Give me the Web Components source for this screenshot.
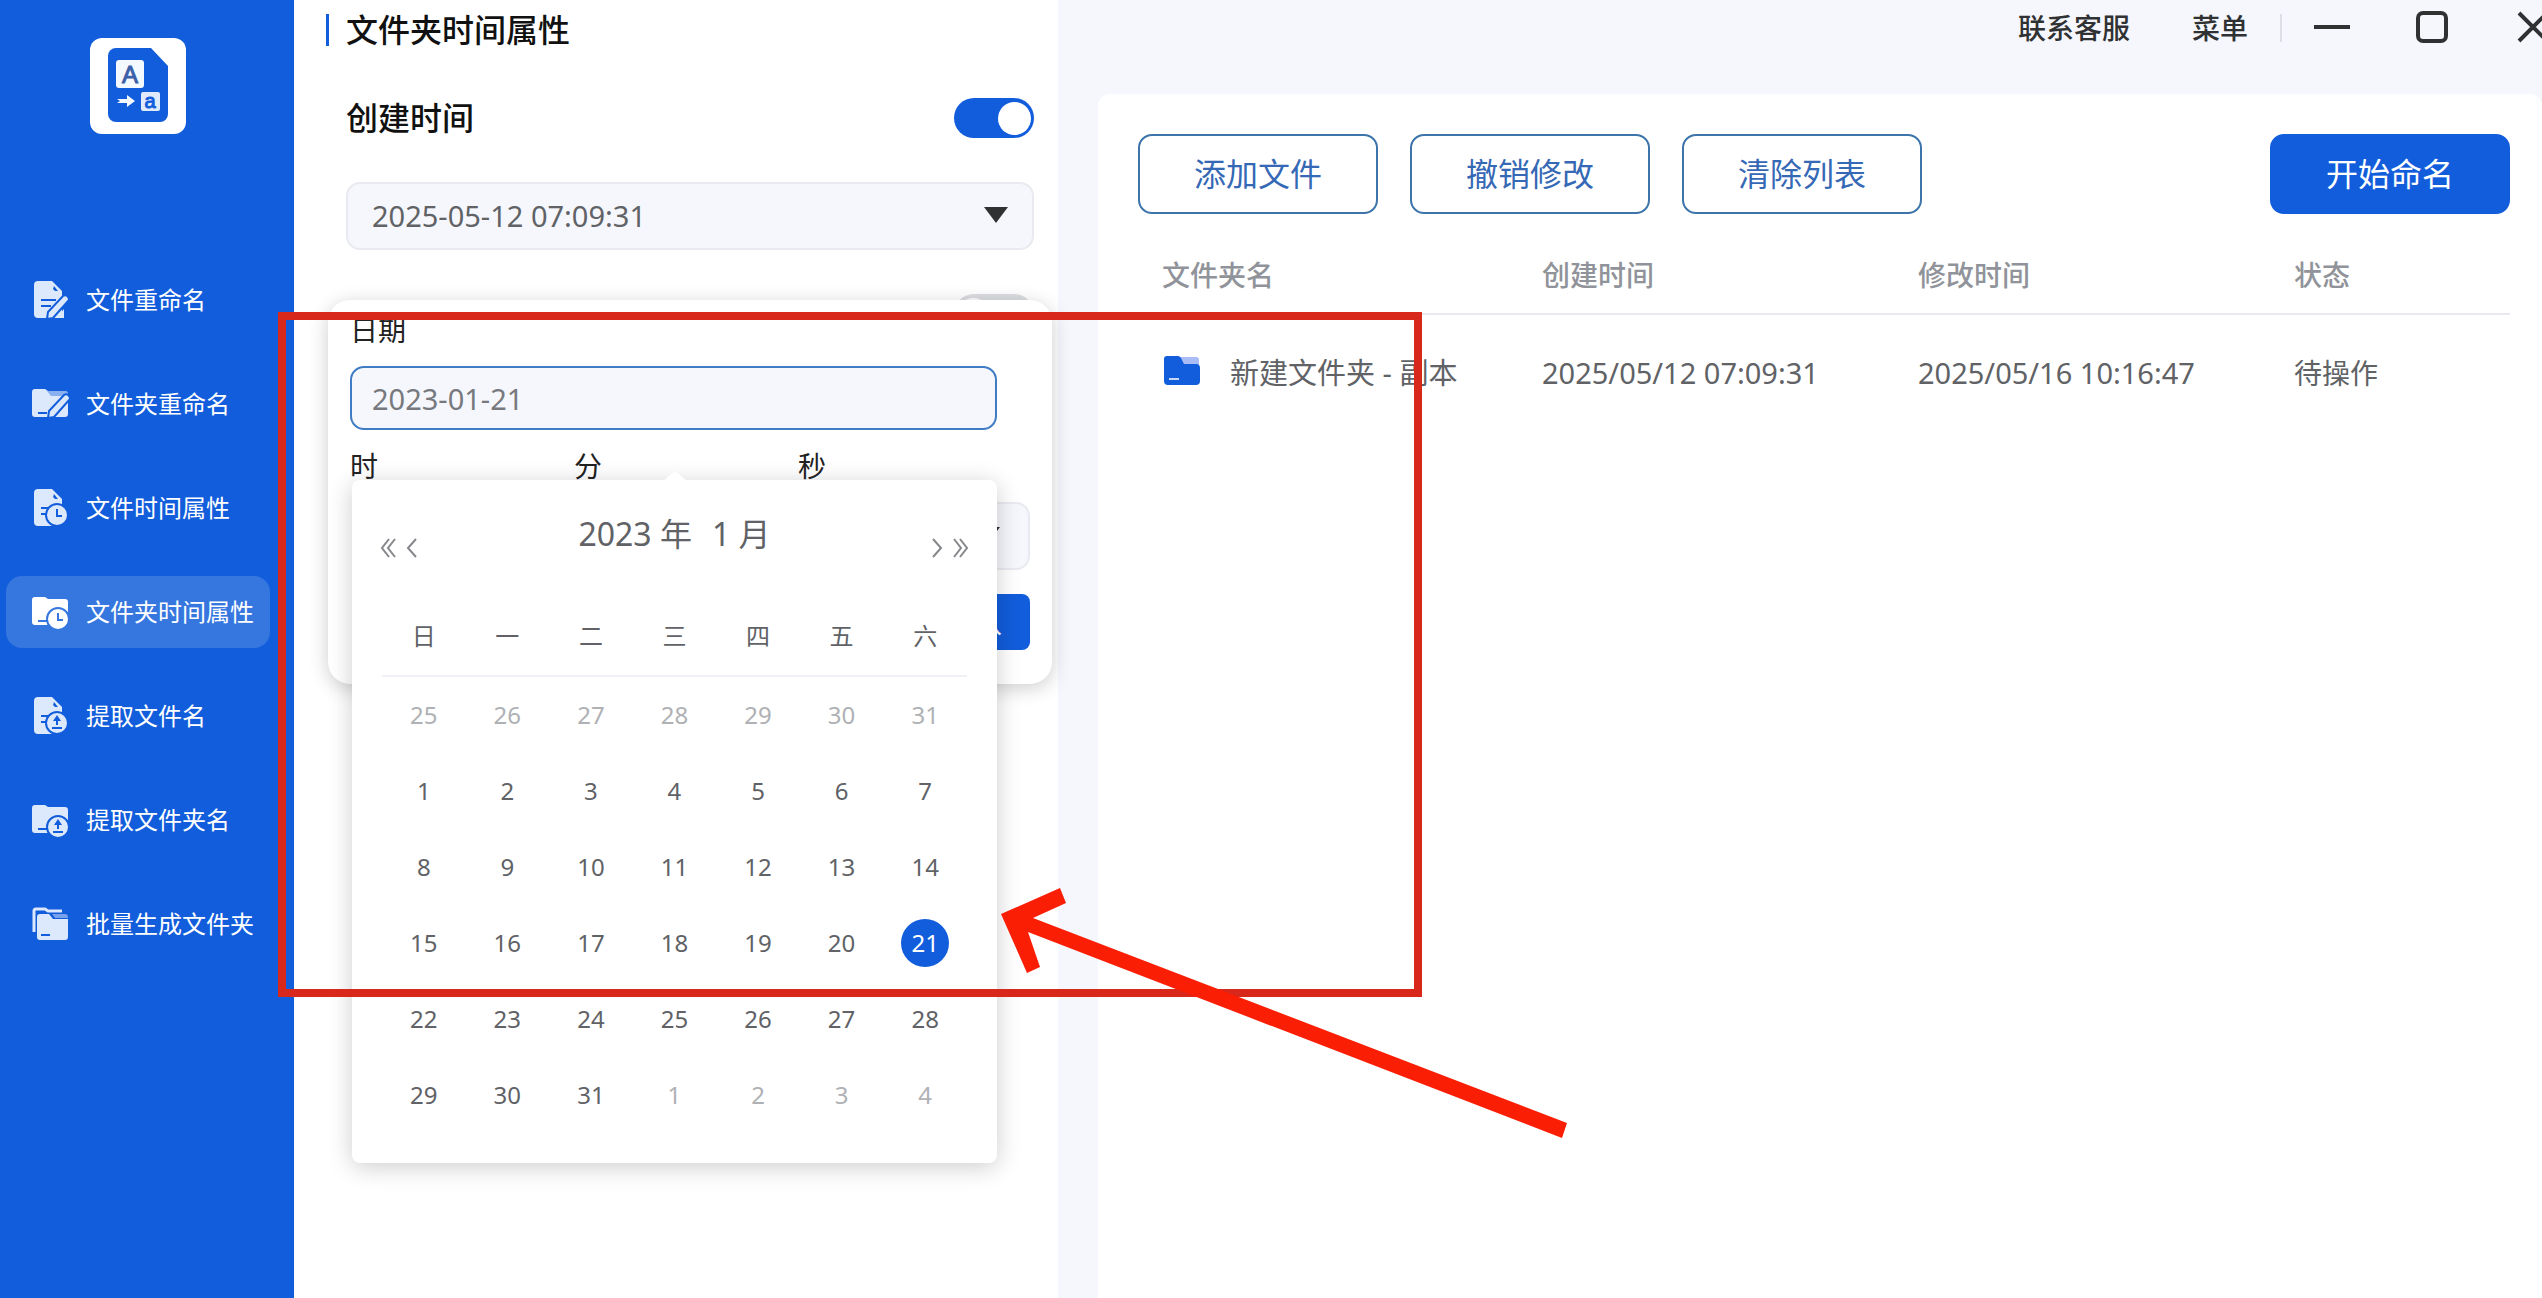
<!DOCTYPE html>
<html lang="zh-CN">
<head>
<meta charset="utf-8">
<meta name="viewport" content="width=device-width, initial-scale=1">
<title>文件夹时间属性</title>
<style>
  :root {
    --blue: #125ddb;
    --line: #e8eaf0;
    --field: #f5f7fc;
    --text: #606266;
  }
  html, body { height: 100%; }
  body {
    margin: 0;
    overflow: hidden;
    font-family: "Noto Sans", "Noto Sans CJK SC", sans-serif;
    font-size: 28px;
    line-height: 44px;
    color: #222;
    background: var(--field);
  }
</style>
</head>
<body>
<rename-app></rename-app>

<script>
const DOC = `<path fill="currentColor" d="M8 1h14l10 10v23a4 4 0 0 1-4 4H8a4 4 0 0 1-4-4V5a4 4 0 0 1 4-4z"/><path fill="var(--cut)" d="M24 6l4 5h-3l-2-2z"/>`;
const FOLDER = `<path fill="currentColor" d="M5 5h10l3 2h17a3 3 0 0 1 3 3v20a3 3 0 0 1-3 3H5a3 3 0 0 1-3-3V8a3 3 0 0 1 3-3z"/>`;
const PENCIL = `<path fill="currentColor" stroke="var(--cut)" stroke-width="2" d="M17 39l1-7L33 16q3-2 5 1t0 4L23 38z"/><path fill="currentColor" d="M26 38l8-9v9z"/>`;
const RING = `<circle cx="27" cy="27" r="11" fill="currentColor" stroke="var(--cut)" stroke-width="2"/>`;
const CLOCK = `${RING}<path fill="none" stroke="var(--cut)" stroke-width="2" d="M27 21v7h5"/>`;
const UPLOAD = `${RING}<path fill="var(--cut)" d="M27 19l4 6h-3v4h-2v-4h-3zM22 31h10v2H22z"/>`;
const LINES = `<path stroke="var(--cut)" stroke-width="2" d="M11 20h10M11 26h6"/>`;
const DASH = `<path stroke="var(--cut)" stroke-width="2" d="M8 29h9"/>`;

const icons = {
  "doc-edit": `${DOC}<path stroke="var(--cut)" stroke-width="2" d="M11 20h15M11 26h10"/>${PENCIL}`,
  "folder-edit": `${FOLDER}<path fill="var(--cut)" opacity=".4" d="M17 7h18q3 0 3 3v2H21z"/>${DASH}<g transform="translate(1 -5)">${PENCIL}</g>`,
  "doc-clock": `${DOC}${LINES}${CLOCK}`,
  "folder-clock": `${FOLDER}${DASH}<g transform="translate(1 0)">${CLOCK}</g>`,
  "doc-up": `${DOC}${LINES}${UPLOAD}`,
  "folder-up": `${FOLDER}${DASH}<g transform="translate(1 0)">${UPLOAD}</g>`,
  "folders": `<path fill="none" stroke="currentColor" stroke-width="3" d="M4 28V7q0-2 2-2h9l3 2h14"/>
    <path fill="currentColor" d="M10 10h9l4 5h15v18a3 3 0 0 1-3 3H10a3 3 0 0 1-3-3V13a3 3 0 0 1 3-3z"/>
    <path fill="currentColor" opacity=".5" d="M22 10h13q3 0 3 4H25z"/><path stroke="var(--cut)" stroke-width="2" d="M11 31h9"/>`
};

class NavItem extends HTMLElement {
  constructor() {
    super();
    this.attachShadow({ mode: "open" });
  }

  static get styles() {
    return /* css */`
      :host { display: block; --cut: var(--blue); }
      :host([active]) { --cut: #3677df; }
      a {
        display: flex;
        align-items: center;
        gap: 16px;
        height: 72px;
        padding-left: 24px;
        border-radius: 16px;
        font-size: 24px;
        white-space: nowrap;
        text-decoration: none;
        color: #fff;
      }
      svg { width: 40px; height: 40px; color: #dce8fc; flex: none; }
      :host([active]) a { background: #3677df; }
      :host([active]) svg { color: #fff; }
    `;
  }

  connectedCallback() {
    this.shadowRoot.innerHTML = /* html */`
    <style>${NavItem.styles}</style>
    <a href="#${this.getAttribute("icon")}">
      <svg viewBox="0 0 40 40" aria-hidden="true">${icons[this.getAttribute("icon")]}</svg>
      <slot></slot>
    </a>`;
  }
}

class AppSidebar extends HTMLElement {
  constructor() {
    super();
    this.attachShadow({ mode: "open" });
  }

  static get styles() {
    return /* css */`
      :host { display: block; background: var(--blue); }
      .logo { display: block; width: 96px; height: 96px; margin: 38px auto 130px 90px; }
      nav { display: grid; gap: 32px; padding: 0 24px 0 6px; }
    `;
  }

  connectedCallback() {
    this.shadowRoot.innerHTML = /* html */`
    <style>${AppSidebar.styles}</style>
    <svg class="logo" viewBox="0 0 96 96" font-family="Liberation Sans" text-anchor="middle">
      <rect width="96" height="96" rx="12" fill="#fff"/>
      <path fill="#125ddb" d="M26 10h35l17 18v48a8 8 0 0 1-8 8H26a8 8 0 0 1-8-8V18a8 8 0 0 1 8-8z"/>
      <rect x="26" y="22" width="28" height="28" rx="3" fill="#f4f8ff"/>
      <rect x="51" y="54" width="19" height="19" rx="2" fill="#dfeafb"/>
      <text x="40" y="45" font-size="24" fill="#3b5fa8" stroke="#3b5fa8">A</text>
      <text x="60" y="70" font-size="20" fill="#125ddb" stroke="#125ddb">a</text>
      <path fill="#f4f8ff" d="M27 61h10v-4l8 6-8 6v-4H27l3-2z"/>
    </svg>
    <nav>
      <nav-item icon="doc-edit">文件重命名</nav-item>
      <nav-item icon="folder-edit">文件夹重命名</nav-item>
      <nav-item icon="doc-clock">文件时间属性</nav-item>
      <nav-item icon="folder-clock" active>文件夹时间属性</nav-item>
      <nav-item icon="doc-up">提取文件名</nav-item>
      <nav-item icon="folder-up">提取文件夹名</nav-item>
      <nav-item icon="folders">批量生成文件夹</nav-item>
    </nav>`;
  }
}

class ToggleSwitch extends HTMLElement {
  constructor() {
    super();
    this.attachShadow({ mode: "open" });
  }

  static get styles() {
    return /* css */`
      :host { display: block; height: 40px; }
      input {
        appearance: none;
        display: flex;
        align-items: center;
        box-sizing: border-box;
        width: 80px;
        height: 40px;
        margin: 0;
        padding: 0 3px;
        border-radius: 20px;
        background: #dcdde0;
      }
      input::before { content: ""; width: 33px; height: 33px; border-radius: 50%; background: #fff; }
      input:checked { background: var(--blue); justify-content: flex-end; }
    `;
  }

  connectedCallback() {
    this.shadowRoot.innerHTML = /* html */`
    <style>${ToggleSwitch.styles}</style>
    <input type="checkbox" role="switch" aria-label="${this.getAttribute("label")}" ${this.hasAttribute("on") ? "checked" : ""}>`;
  }
}

class SelectBox extends HTMLElement {
  constructor() {
    super();
    this.attachShadow({ mode: "open" });
  }

  static get styles() {
    return /* css */`
      :host { display: block; position: relative; }
      select {
        appearance: none;
        display: block;
        box-sizing: border-box;
        width: 100%;
        height: 68px;
        padding: 0 60px 0 24px;
        border: 2px solid var(--line);
        border-radius: 14px;
        background: var(--field);
        font: inherit;
        font-size: 29px;
        color: var(--text);
      }
      svg { position: absolute; right: var(--arrow-right, 26px); top: 25px; width: 24px; height: 16px; pointer-events: none; }
    `;
  }

  connectedCallback() {
    this.shadowRoot.innerHTML = /* html */`
    <style>${SelectBox.styles}</style>
    <select aria-label="${this.getAttribute("label")}"><option>${this.getAttribute("value") || ""}</option></select>
    <svg viewBox="0 0 24 16" aria-hidden="true"><path fill="#303133" d="M0 0h24L12 16z"/></svg>`;
  }
}

class MonthCalendar extends HTMLElement {
  constructor() {
    super();
    this.attachShadow({ mode: "open" });
  }

  static get styles() {
    return /* css */`
      :host {
        display: block;
        background: #fff;
        border-radius: 8px;
        padding: 32px 30px 30px;
        box-shadow: 0 4px 24px #0003;
        color: var(--text);
      }
      .tip { position: absolute; left: 50%; top: -9px; width: 24px; height: 10px; margin-left: -12px; }
      header { display: flex; justify-content: space-between; height: 50px; margin-bottom: 35px; }
      h2 { display: flex; gap: 20px; margin: 0; font-size: 32px; font-weight: 400; }
      .arrows { display: flex; gap: 10px; align-self: flex-end; margin: 0 -2px 4px; }
      button { font: inherit; color: inherit; background: none; border: 0; padding: 0; }
      .arrows button { display: flex; }
      .arrows svg { width: 16px; height: 20px; fill: none; stroke: #85878b; stroke-width: 2; }
      .arrows svg.one { width: 11px; }
      table { width: 100%; border-collapse: collapse; table-layout: fixed; font-size: 24px; }
      th { height: 78px; padding: 0; font-weight: 400; border-bottom: 2px solid #f0f1f5; }
      td { height: 76px; padding: 0; text-align: center; }
      td button { width: 48px; height: 48px; border-radius: 50%; vertical-align: middle; }
      .other { color: #afb1b5; }
      .picked { background: var(--blue); color: #fff; }
    `;
  }

  get rows() {
    const days = [];
    for (let i = 25; i <= 31; i++) days.push([i, "other"]);
    for (let i = 1; i <= 31; i++) days.push([i, i === 21 ? "picked" : ""]);
    for (let i = 1; i <= 4; i++) days.push([i, "other"]);

    let html = "";
    while (days.length) {
      const week = days.splice(0, 7);
      html += `<tr>${week.map(([day, name]) => `<td><button type="button" class="${name}">${day}</button></td>`).join("")}</tr>`;
    }
    return html;
  }

  connectedCallback() {
    this.shadowRoot.innerHTML = /* html */`
    <style>${MonthCalendar.styles}</style>
    <svg class="tip" viewBox="0 0 24 10" aria-hidden="true"><path fill="#fff" d="M0 10L12 0l12 10z"/></svg>
    <header>
      <div class="arrows">
        <button type="button" aria-label="上一年"><svg viewBox="0 0 16 20"><path d="M9 1L2 10l7 9M15 1l-7 9 7 9"/></svg></button>
        <button type="button" aria-label="上个月"><svg class="one" viewBox="0 0 11 20"><path d="M10 1L2 10l8 9"/></svg></button>
      </div>
      <h2><span>2023 年</span><span>1 月</span></h2>
      <div class="arrows">
        <button type="button" aria-label="下个月"><svg class="one" viewBox="0 0 11 20"><path d="M1 1l8 9-8 9"/></svg></button>
        <button type="button" aria-label="下一年"><svg viewBox="0 0 16 20"><path d="M1 1l7 9-7 9M7 1l7 9-7 9"/></svg></button>
      </div>
    </header>
    <table>
      <thead><tr>${[..."日一二三四五六"].map((day) => `<th>${day}</th>`).join("")}</tr></thead>
      <tbody>${this.rows}</tbody>
    </table>`;
  }
}

class DatePopover extends HTMLElement {
  constructor() {
    super();
    this.attachShadow({ mode: "open" });
  }

  static get styles() {
    return /* css */`
      :host {
        display: block;
        background: #fff;
        border-radius: 22px;
        padding: 8px 22px 34px;
        box-shadow: 0 4px 20px #0003;
      }
      label { display: block; margin-bottom: 14px; }
      .date { position: relative; margin: 0 33px 14px 0; }
      input {
        display: block;
        box-sizing: border-box;
        width: 100%;
        height: 64px;
        padding: 0 20px;
        border: 2px solid #3f7cc4;
        border-radius: 14px;
        background: var(--field);
        font: inherit;
        font-size: 29px;
        color: #77797e;
        outline: 0;
      }
      month-calendar { position: absolute; z-index: 1; top: calc(100% + 50px); left: 2px; right: 0; }
      .time { display: grid; grid-template-columns: 224px 224px 1fr; margin-bottom: 24px; }
      .time select-box { margin-left: 4px; --arrow-right: 30px; }
      .ok {
        display: block;
        width: 112px;
        height: 56px;
        margin-left: auto;
        border: 0;
        border-radius: 8px;
        background: var(--blue);
        color: #fff;
        font: inherit;
      }
    `;
  }

  connectedCallback() {
    this.shadowRoot.innerHTML = /* html */`
    <style>${DatePopover.styles}</style>
    <label for="date">日期</label>
    <div class="date">
      <input id="date" type="text" value="2023-01-21">
      <month-calendar></month-calendar>
    </div>
    <div class="time">
      <div><label>时</label><select-box label="时"></select-box></div>
      <div><label>分</label><select-box label="分"></select-box></div>
      <div><label>秒</label><select-box label="秒"></select-box></div>
    </div>
    <button class="ok" type="button">确认</button>`;
  }
}

class TimePanel extends HTMLElement {
  constructor() {
    super();
    this.attachShadow({ mode: "open" });
  }

  static get styles() {
    return /* css */`
      :host { display: block; background: #fff; padding: 8px 24px 0 32px; }
      h1, h2 { margin: 0; font-size: 32px; font-weight: 500; line-height: 44px; color: #111; }
      h1 { display: flex; align-items: center; gap: 17px; margin-bottom: 44px; }
      h1::before { content: ""; width: 3px; height: 32px; background: var(--blue); }
      .body { padding-left: 20px; }
      .row { display: flex; align-items: center; justify-content: space-between; height: 44px; margin-bottom: 42px; }
      .picker { position: relative; margin-bottom: 42px; }
      date-popover { position: absolute; top: calc(100% + 50px); left: -18px; right: -18px; }
    `;
  }

  connectedCallback() {
    this.shadowRoot.innerHTML = /* html */`
    <style>${TimePanel.styles}</style>
    <h1>文件夹时间属性</h1>
    <div class="body">
      <div class="row"><h2>创建时间</h2><toggle-switch label="创建时间" on></toggle-switch></div>
      <div class="picker">
        <select-box label="创建时间" value="2025-05-12 07:09:31"></select-box>
        <date-popover></date-popover>
      </div>
      <div class="row"><span></span><toggle-switch label="修改时间"></toggle-switch></div>
    </div>`;
  }
}

class WindowBar extends HTMLElement {
  constructor() {
    super();
    this.attachShadow({ mode: "open" });
  }

  static get styles() {
    return /* css */`
      :host { display: flex; justify-content: flex-end; height: 94px; overflow: hidden; }
      .links { display: flex; gap: 62px; height: 56px; align-items: center; margin-right: 32px; }
      a { color: #303133; text-decoration: none; font-weight: 500; }
      .links::after { content: ""; width: 2px; height: 28px; margin-left: -30px; background: #dcdfe6; }
      .tools { display: flex; gap: 64px; height: 56px; align-items: center; margin-right: -8px; }
      button { display: flex; padding: 0; border: 0; background: none; }
      svg { width: 36px; height: 36px; fill: none; stroke: #303133; stroke-width: 4; }
    `;
  }

  connectedCallback() {
    this.shadowRoot.innerHTML = /* html */`
    <style>${WindowBar.styles}</style>
    <div class="links"><a href="#service">联系客服</a><a href="#menu">菜单</a></div>
    <div class="tools">
      <button type="button" aria-label="最小化"><svg viewBox="0 0 36 36"><path d="M0 17h36"/></svg></button>
      <button type="button" aria-label="最大化"><svg viewBox="0 0 36 36"><rect x="4" y="3" width="28" height="28" rx="5"/></svg></button>
      <button type="button" aria-label="关闭"><svg viewBox="0 0 36 36" stroke-width="3"><path d="M5 3l28 28M33 3L5 31"/></svg></button>
    </div>`;
  }
}

class ToolButton extends HTMLElement {
  constructor() {
    super();
    this.attachShadow({ mode: "open" });
  }

  static get styles() {
    return /* css */`
      :host { display: block; }
      button {
        display: block;
        width: 240px;
        height: 80px;
        border: 2px solid #3d75ab;
        border-radius: 14px;
        background: #fff;
        color: #3568b5;
        font: inherit;
        font-size: 32px;
      }
      :host([primary]) button { background: var(--blue); border-color: var(--blue); color: #fff; }
    `;
  }

  connectedCallback() {
    this.shadowRoot.innerHTML = /* html */`
    <style>${ToolButton.styles}</style>
    <button type="button"><slot></slot></button>`;
  }
}

class FileList extends HTMLElement {
  constructor() {
    super();
    this.attachShadow({ mode: "open" });
  }

  static get styles() {
    return /* css */`
      :host { display: block; background: #fff; border-radius: 12px 12px 0 0; padding: 40px 32px 0 40px; }
      .bar { display: flex; gap: 32px; margin-bottom: 22px; }
      .bar [primary] { margin-left: auto; }
      table { width: 100%; border-collapse: collapse; table-layout: fixed; color: var(--text); }
      .name { width: 380px; }
      .state { width: 240px; }
      th, td { padding: 0 0 0 24px; text-align: left; white-space: nowrap; box-sizing: border-box; }
      th { height: 78px; font-weight: 500; color: #909399; border-bottom: 2px solid var(--line); }
      td { height: 116px; }
      .num { font-size: 29px; }
      .file { display: flex; align-items: center; gap: 28px; font-size: 29px; }
      svg { width: 40px; height: 36px; flex: none; }
    `;
  }

  connectedCallback() {
    this.shadowRoot.innerHTML = /* html */`
    <style>${FileList.styles}</style>
    <div class="bar">
      <tool-button>添加文件</tool-button>
      <tool-button>撤销修改</tool-button>
      <tool-button>清除列表</tool-button>
      <tool-button primary>开始命名</tool-button>
    </div>
    <table>
      <thead>
        <tr><th class="name">文件夹名</th><th>创建时间</th><th>修改时间</th><th class="state">状态</th></tr>
      </thead>
      <tbody>
        <tr>
          <td><div class="file">
            <svg viewBox="0 0 40 36" aria-hidden="true">
              <path fill="#a9bcf5" d="M16 2h18q3 0 3 3v8H20z"/>
              <path fill="#125ddb" d="M5 1h11q2 0 3 2l3 6h12q4 0 4 4v13q0 4-4 4H6q-4 0-4-4V4q0-3 3-3z"/>
              <path stroke="#c5d8fa" stroke-width="2" d="M7 24h10"/>
            </svg>
            <span>新建文件夹 - 副本</span>
          </div></td>
          <td class="num">2025/05/12 07:09:31</td>
          <td class="num">2025/05/16 10:16:47</td>
          <td>待操作</td>
        </tr>
      </tbody>
    </table>`;
  }
}

class MarkLayer extends HTMLElement {
  constructor() {
    super();
    this.attachShadow({ mode: "open" });
  }

  static get styles() {
    return /* css */`
      :host { position: absolute; inset: 0; z-index: 5; overflow: hidden; pointer-events: none; }
      svg { display: block; width: 1600px; height: 1200px; }
    `;
  }

  connectedCallback() {
    this.shadowRoot.innerHTML = /* html */`
    <style>${MarkLayer.styles}</style>
    <svg viewBox="0 0 1600 1200" aria-hidden="true">
      <rect x="282" y="316" width="1136" height="677" fill="none" stroke="#d8281c" stroke-width="8"/>
      <path fill="#fa1e05" d="M1001 914L1060 888L1066 903L1033 918L1567 1123L1562 1138L1028 932L1040 967L1027 973z"/>
    </svg>`;
  }
}

class RenameApp extends HTMLElement {
  constructor() {
    super();
    this.attachShadow({ mode: "open" });
  }

  static get styles() {
    return /* css */`
      :host {
        display: grid;
        grid-template-columns: 294px 764px minmax(0, 1fr);
        height: 100%;
        position: relative;
      }
      time-panel { position: relative; z-index: 1; }
      main { display: grid; grid-template-rows: auto 1fr; padding-left: 40px; }
    `;
  }

  connectedCallback() {
    this.shadowRoot.innerHTML = /* html */`
    <style>${RenameApp.styles}</style>
    <app-sidebar></app-sidebar>
    <time-panel></time-panel>
    <main>
      <window-bar></window-bar>
      <file-list></file-list>
    </main>
    <mark-layer></mark-layer>`;
  }
}

customElements.define("nav-item", NavItem);
customElements.define("app-sidebar", AppSidebar);
customElements.define("toggle-switch", ToggleSwitch);
customElements.define("select-box", SelectBox);
customElements.define("month-calendar", MonthCalendar);
customElements.define("date-popover", DatePopover);
customElements.define("time-panel", TimePanel);
customElements.define("window-bar", WindowBar);
customElements.define("tool-button", ToolButton);
customElements.define("file-list", FileList);
customElements.define("mark-layer", MarkLayer);
customElements.define("rename-app", RenameApp);
</script>
</body>
</html>
